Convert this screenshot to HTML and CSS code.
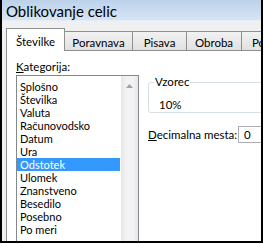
FILE: index.html
```html
<!DOCTYPE html>
<html lang="sl">
<head>
    <meta charset="UTF-8">
    <title>Oblikovanje celic</title>
    <link rel="stylesheet" href="styles.css">
</head>
<body>

<div class="window">
    <div class="titlebar">Oblikovanje celic</div>

    <div class="dialog">
        <div class="tabs">
            <div class="tab active">Številke</div>
            <div class="tab tab-poravnava">Poravnava</div>
            <div class="tab tab-pisava">Pisava</div>
            <div class="tab tab-obroba">Obroba</div>
            <div class="tab tab-po">Polnilo</div>
        </div>

        <div class="panel">
            <div class="left">
                <div class="label"><u>K</u>ategorija:</div>
                <div class="listbox">
                    <div class="items">
                        <div class="item">Splošno</div>
                        <div class="item">Številka</div>
                        <div class="item">Valuta</div>
                        <div class="item">Računovodsko</div>
                        <div class="item">Datum</div>
                        <div class="item">Ura</div>
                        <div class="item selected">Odstotek</div>
                        <div class="item">Ulomek</div>
                        <div class="item">Znanstveno</div>
                        <div class="item">Besedilo</div>
                        <div class="item">Posebno</div>
                        <div class="item">Po meri</div>
                    </div>
                    <div class="scrollbar">
                        <div class="scroll-up">
                            <svg width="7" height="4" viewBox="0 0 7 4"><path d="M0 4 L3.5 0 L7 4 Z" fill="#a0a0a0"/></svg>
                        </div>
                    </div>
                </div>
            </div>

            <div class="right">
                <fieldset class="sample">
                    <legend>Vzorec</legend>
                    <div class="sample-value">10%</div>
                </fieldset>
                <div class="decimals">
                    <span><u>D</u>ecimalna mesta:</span>
                    <div class="spin">0</div>
                </div>
            </div>
        </div>
    </div>
</div>

</body>
</html>
```

FILE: styles.css
```css
* {
    box-sizing: border-box;
}
body {
    margin: 0;
    width: 264px;
    height: 244px;
    overflow: hidden;
    background-color: #ffffff;
    font-family: "Lato", "Liberation Sans", sans-serif;
    font-size: 11.5px;
    color: #000000;
}
.window {
    width: 263px;
    height: 243px;
    border-left: 2px solid #000000;
    border-right: 2px solid #000000;
    border-bottom: 2px solid #000000;
    background-color: #f0f0f0;
    overflow: hidden;
}
.titlebar {
    height: 21px;
    padding: 1px 0 0 4px;
    font-size: 15px;
    line-height: 20px;
    background: linear-gradient(#bcd2ea, #d6e5f4);
    border-bottom: 1px solid #e4edf7;
}
.dialog {
    padding: 7px 0 0 4px;
}
.tabs {
    display: flex;
    align-items: flex-end;
    height: 22px;
    white-space: nowrap;
}
.tab {
    flex-shrink: 0;
    height: 19px;
    line-height: 22px;
    text-align: center;
    border: 1px solid #8e8f8f;
    border-bottom: none;
    margin-left: -1px;
    background: linear-gradient(#f2f2f2, #e1e1e1);
    overflow: hidden;
}
.tab.active {
    height: 23px;
    line-height: 26px;
    width: 59px;
    margin-left: 0;
    margin-bottom: -1px;
    background: #ffffff;
    position: relative;
    z-index: 1;
}
.tab-poravnava {
    width: 69px;
}
.tab-pisava {
    width: 55px;
}
.tab-obroba {
    width: 56px;
}
.tab-po {
    width: 60px;
    text-align: left;
    padding-left: 10px;
}
.panel {
    display: flex;
    height: 200px;
    background-color: #ffffff;
    border: 1px solid #8e8f8f;
    border-right: none;
    padding: 8px 0 0 9px;
}
.label {
    height: 16px;
    line-height: 15px;
}
.listbox {
    display: flex;
    width: 123px;
    height: 180px;
    border: 1px solid #828790;
}
.items {
    flex: 1;
    padding-top: 4px;
    font-size: 11px;
}
.item {
    height: 13px;
    line-height: 13px;
    padding-left: 3px;
}
.item.selected {
    background-color: #3399ff;
    color: #ffffff;
}
.scrollbar {
    width: 18px;
    background: linear-gradient(to right, #e6e6e6, #f2f2f2 30%, #f2f2f2 70%, #e6e6e6);
    border-left: 1px solid #ffffff;
}
.scroll-up {
    height: 17px;
    display: flex;
    align-items: center;
    justify-content: center;
    padding-top: 2px;
}
.right {
    padding: 16px 0 0 9px;
    flex: 1;
}
.sample {
    margin: 0;
    width: 140px;
    height: 38px;
    padding: 0 0 0 10px;
    border: 1px solid #d5dfe5;
    border-radius: 3px;
}
.sample legend {
    padding: 0 1px;
    margin-left: -5px;
    line-height: 14px;
}
.sample-value {
    line-height: 16px;
    padding-top: 8px;
}
.decimals {
    display: flex;
    align-items: center;
    margin-top: 13px;
    height: 17px;
}
.decimals span {
    width: 90px;
    flex-shrink: 0;
}
.spin {
    flex-shrink: 0;
    width: 40px;
    height: 17px;
    line-height: 15px;
    padding-left: 5px;
    border: 1px solid #abadb3;
}
```
